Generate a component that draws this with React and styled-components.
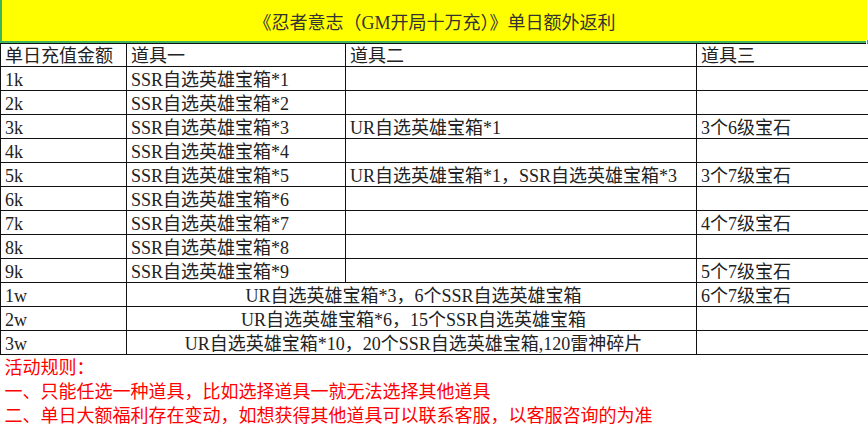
import React from 'react';
import styled, { createGlobalStyle } from 'styled-components';

const GlobalStyle = createGlobalStyle`
  html, body {
    margin: 0;
    padding: 0;
    background: #ffffff;
    overflow: hidden;
  }
  body {
    font-family: "Liberation Serif", "Noto Sans CJK SC", serif;
  }
`;

const Sheet = styled.div`
  width: 868px;
  height: 426px;
  overflow: hidden;
  color: #222222;
  font-size: 18px;
`;

const TitleBar = styled.div`
  position: relative;
  height: 41px;
  width: 865px;
  display: flex;
  align-items: center;
  justify-content: center;
  background: #ffff00;
  border-left: 2px solid #3fb45f;
  border-bottom: 2px solid #3fb45f;
  box-sizing: content-box;
  color: #333333;
  font-size: 18px;
`;

const Handle = styled.span`
  position: absolute;
  right: -3px;
  bottom: -3px;
  width: 3px;
  height: 4px;
  background: #3fb45f;
  border-left: 1px solid #ffffff;
`;

const Grid = styled.table`
  border-collapse: collapse;
  table-layout: fixed;
  width: 900px;
`;

const Cell = styled.td`
  border: ${p => (p.$plain ? 'none' : '1px solid #111111')};
  padding: 0 0 0 4px;
  height: ${p => p.$h || 23}px;
  line-height: ${p => (p.$h || 23) - 3}px;
  vertical-align: bottom;
  text-align: ${p => (p.$center ? 'center' : 'left')};
  white-space: nowrap;
  overflow: hidden;
  color: ${p => (p.$red ? '#ff0000' : 'inherit')};
`;

const rows = [
  ['1k', 'SSR自选英雄宝箱*1', '', ''],
  ['2k', 'SSR自选英雄宝箱*2', '', ''],
  ['3k', 'SSR自选英雄宝箱*3', 'UR自选英雄宝箱*1', '3个6级宝石'],
  ['4k', 'SSR自选英雄宝箱*4', '', ''],
  ['5k', 'SSR自选英雄宝箱*5', 'UR自选英雄宝箱*1，SSR自选英雄宝箱*3', '3个7级宝石'],
  ['6k', 'SSR自选英雄宝箱*6', '', ''],
  ['7k', 'SSR自选英雄宝箱*7', '', '4个7级宝石'],
  ['8k', 'SSR自选英雄宝箱*8', '', ''],
  ['9k', 'SSR自选英雄宝箱*9', '', '5个7级宝石'],
];

const merged = [
  ['1w', 'UR自选英雄宝箱*3，6个SSR自选英雄宝箱', '6个7级宝石'],
  ['2w', 'UR自选英雄宝箱*6，15个SSR自选英雄宝箱', ''],
  ['3w', 'UR自选英雄宝箱*10，20个SSR自选英雄宝箱,120雷神碎片', ''],
];

const rules = [
  '活动规则：',
  '一、只能任选一种道具，比如选择道具一就无法选择其他道具',
  '二、单日大额福利存在变动，如想获得其他道具可以联系客服，以客服咨询的为准',
];

export default function App() {
  return (
    <>
      <GlobalStyle />
      <Sheet>
        <TitleBar>
          《忍者意志（GM开局十万充）》单日额外返利
          <Handle />
        </TitleBar>
        <Grid>
          <colgroup>
            <col style={{ width: 126 }} />
            <col style={{ width: 219 }} />
            <col style={{ width: 351 }} />
            <col style={{ width: 204 }} />
          </colgroup>
          <tbody>
            <tr>
              <Cell $h={22}>单日充值金额</Cell>
              <Cell $h={22}>道具一</Cell>
              <Cell $h={22}>道具二</Cell>
              <Cell $h={22}>道具三</Cell>
            </tr>
            {rows.map(r => (
              <tr key={r[0]}>
                {r.map((v, i) => (
                  <Cell key={i}>{v}</Cell>
                ))}
              </tr>
            ))}
            {merged.map(r => (
              <tr key={r[0]}>
                <Cell>{r[0]}</Cell>
                <Cell colSpan={2} $center>{r[1]}</Cell>
                <Cell>{r[2]}</Cell>
              </tr>
            ))}
            {rules.map(t => (
              <tr key={t}>
                <Cell colSpan={4} $plain $red $h={24}>{t}</Cell>
              </tr>
            ))}
          </tbody>
        </Grid>
      </Sheet>
    </>
  );
}
